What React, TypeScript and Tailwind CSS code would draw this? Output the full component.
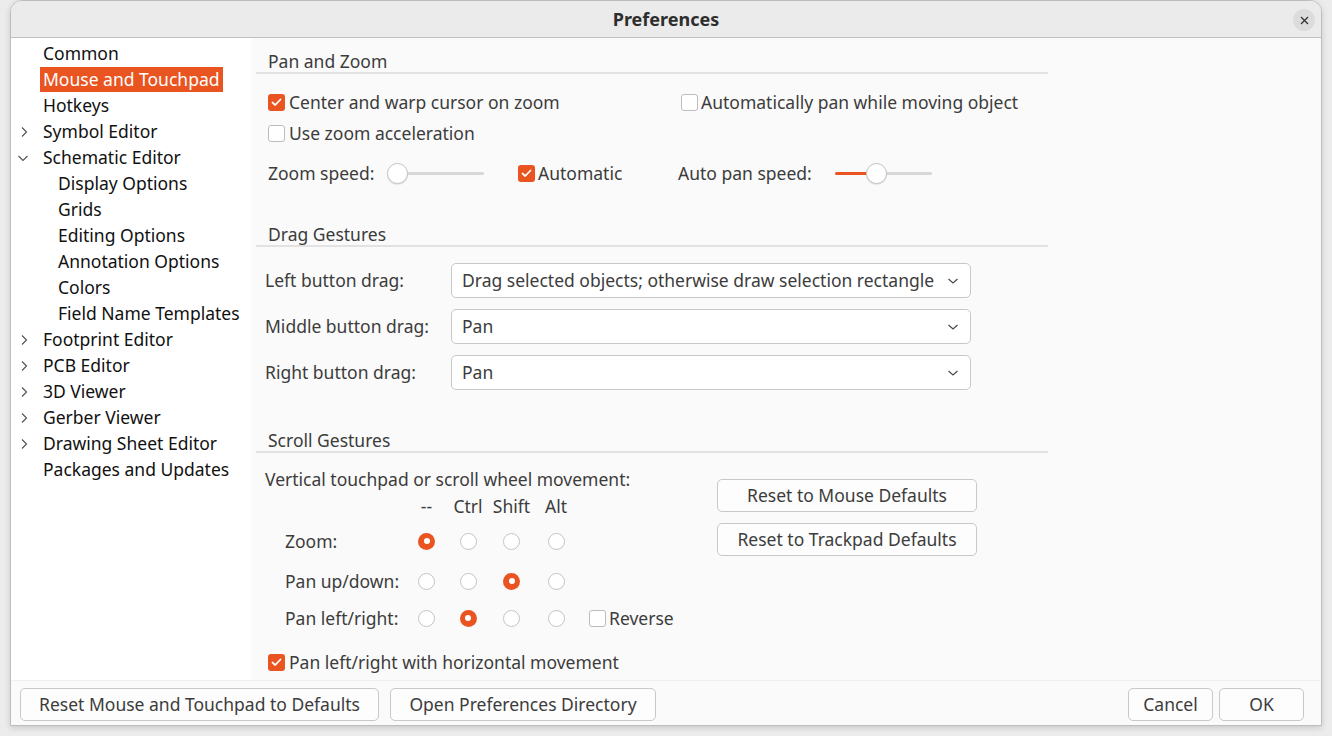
import React from "react";

const F = { fontFamily: '"Noto Sans", "Open Sans", sans-serif' };

function Check({ on }: { on?: boolean }) {
  if (on)
    return (
      <span className="w-[17px] h-[17px] rounded-[3px] bg-[#e95420] flex items-center justify-center shrink-0">
        <svg width="11" height="9" viewBox="0 0 11 9">
          <path d="M1.5 4.5 L4.2 7 L9.5 1.5" stroke="white" strokeWidth="1.8" fill="none" strokeLinecap="round" strokeLinejoin="round" />
        </svg>
      </span>
    );
  return <span className="w-[17px] h-[17px] rounded-[3px] bg-white border border-[#bcbcbc] shrink-0" />;
}

function Radio({ on }: { on?: boolean }) {
  if (on)
    return (
      <span className="w-[17px] h-[17px] rounded-full bg-[#e95420] flex items-center justify-center">
        <span className="w-[6px] h-[6px] rounded-full bg-white" />
      </span>
    );
  return <span className="w-[17px] h-[17px] rounded-full bg-white border border-[#c4c4c4]" />;
}

function Slider({ pos, fill }: { pos: number; fill?: boolean }) {
  return (
    <div className="relative w-[107px] h-[22px] flex items-center">
      <div className="absolute left-[10px] right-[10px] h-[3px] rounded bg-[#d8d8d8]" />
      {fill && <div className="absolute left-[0px] h-[3px] rounded bg-[#e95420]" style={{ width: pos }} />}
      <div
        className="absolute w-[21px] h-[21px] rounded-full bg-white border border-[#c2c2c2] shadow-[0_1px_1px_rgba(0,0,0,0.1)]"
        style={{ left: pos - 10 }}
      />
    </div>
  );
}

function Combo({ text }: { text: string }) {
  return (
    <div className="w-[520px] h-[35px] rounded-[5px] border border-[#c8c8c8] bg-white flex items-center pl-[10px] pr-[11px]">
      <span className="flex-1 whitespace-nowrap">{text}</span>
      <svg width="12" height="8" viewBox="0 0 12 8">
        <path d="M1.5 2 L6 6 L10.5 2" stroke="#4a4a4a" strokeWidth="1.2" fill="none" />
      </svg>
    </div>
  );
}

function Btn({ children, w }: { children: React.ReactNode; w: string }) {
  return (
    <div className={`${w} h-[33px] rounded-[5px] border border-[#c8c8c8] bg-[#fdfdfd] flex items-center justify-center whitespace-nowrap`}>
      {children}
    </div>
  );
}

function Header({ text }: { text: string }) {
  return (
    <div className="w-[792px] h-[24px] border-b-2 border-[#e2e2e2] pl-[12px] flex items-center">{text}</div>
  );
}

const Chev = ({ open }: { open?: boolean }) =>
  open ? (
    <svg width="12" height="8" viewBox="0 0 12 8" className="absolute left-[-23px] top-[9px]">
      <path d="M1.5 2 L6 6.5 L10.5 2" stroke="#555" strokeWidth="1.2" fill="none" />
    </svg>
  ) : (
    <svg width="8" height="12" viewBox="0 0 8 12" className="absolute left-[-20px] top-[7px]">
      <path d="M2 1.5 L6.5 6 L2 10.5" stroke="#555" strokeWidth="1.2" fill="none" />
    </svg>
  );

function TreeItem({ text, child, sel, chev }: { text: string; child?: boolean; sel?: boolean; chev?: "open" | "closed" }) {
  return (
    <div className={`h-[26px] flex items-center ${child ? "pl-[44px]" : "pl-[29px]"}`}>
      <span className={`relative px-[3px] h-[25px] flex items-center whitespace-nowrap ${sel ? "bg-[#e95420] text-white" : ""}`}>
        {chev && <Chev open={chev === "open"} />}
        {text}
      </span>
    </div>
  );
}

export default function App() {
  const cells = ["w-[41px]", "w-[42px]", "w-[45px]", "w-[44px]"];
  const row = (label: string, sel: number, extra?: React.ReactNode, mt?: string) => (
    <div className={`h-[24px] flex items-center pl-[29px] ${mt}`}>
      <span className="w-[121px] whitespace-nowrap">{label}</span>
      {cells.map((c, i) => (
        <span key={i} className={`${c} flex justify-center`}>
          <Radio on={i === sel} />
        </span>
      ))}
      {extra}
    </div>
  );
  return (
    <div className="w-[1332px] h-[736px] bg-[#ececec] pl-[10px] pr-[10px] pb-[10px] text-[#3c3c3c] text-[17.5px]" style={F}>
      <div className="w-[1312px] h-[726px] rounded-t-[12px] border border-[#bdbdbd] bg-[#fafafa] flex flex-col overflow-hidden shadow-[0_2px_6px_rgba(0,0,0,0.15)]">
        {/* title */}
        <div className="h-[37px] bg-[#ebebeb] border-b border-[#c0c0c0] flex items-center justify-center relative shrink-0">
          <span className="font-bold text-[18px] text-[#2e2e2e]">Preferences</span>
          <div className="absolute right-[6px] top-[8px] w-[22px] h-[22px] rounded-full bg-[#dcdcdc] flex items-center justify-center">
            <svg width="9" height="9" viewBox="0 0 9 9">
              <path d="M1 1 L8 8 M8 1 L1 8" stroke="#333" strokeWidth="1.3" />
            </svg>
          </div>
        </div>
        {/* body */}
        <div className="flex h-[642px]">
          <div className="w-[240px] bg-white pt-[2px] text-[#111]">
            <TreeItem text="Common" />
            <TreeItem text="Mouse and Touchpad" sel />
            <TreeItem text="Hotkeys" />
            <TreeItem text="Symbol Editor" chev="closed" />
            <TreeItem text="Schematic Editor" chev="open" />
            <TreeItem text="Display Options" child />
            <TreeItem text="Grids" child />
            <TreeItem text="Editing Options" child />
            <TreeItem text="Annotation Options" child />
            <TreeItem text="Colors" child />
            <TreeItem text="Field Name Templates" child />
            <TreeItem text="Footprint Editor" chev="closed" />
            <TreeItem text="PCB Editor" chev="closed" />
            <TreeItem text="3D Viewer" chev="closed" />
            <TreeItem text="Gerber Viewer" chev="closed" />
            <TreeItem text="Drawing Sheet Editor" chev="closed" />
            <TreeItem text="Packages and Updates" />
          </div>
          <div className="flex-1 pl-[5px] pt-[12px] flex flex-col">
            <Header text="Pan and Zoom" />
            <div className="h-[26px] mt-[15px] flex items-center">
              <div className="w-[425px] flex items-center pl-[12px] gap-[4px]">
                <Check on />
                <span>Center and warp cursor on zoom</span>
              </div>
              <div className="flex items-center gap-[3px]">
                <Check />
                <span>Automatically pan while moving object</span>
              </div>
            </div>
            <div className="h-[26px] mt-[5px] flex items-center pl-[12px] gap-[4px]">
              <Check />
              <span>Use zoom acceleration</span>
            </div>
            <div className="h-[28px] mt-[13px] flex items-center pl-[12px]">
              <span className="w-[119px] whitespace-nowrap">Zoom speed:</span>
              <Slider pos={10} />
              <div className="ml-[24px] w-[160px] flex items-center gap-[3px]">
                <Check on />
                <span>Automatic</span>
              </div>
              <span className="w-[157px] whitespace-nowrap">Auto pan speed:</span>
              <Slider pos={41} fill />
            </div>
            <div className="mt-[36px]">
              <Header text="Drag Gestures" />
            </div>
            {[
              ["Left button drag:", "Drag selected objects; otherwise draw selection rectangle", "mt-[16px]"],
              ["Middle button drag:", "Pan", "mt-[11px]"],
              ["Right button drag:", "Pan", "mt-[11px]"],
            ].map(([l, v, m]) => (
              <div key={l} className={`flex items-center pl-[9px] ${m}`}>
                <span className="w-[186px] whitespace-nowrap">{l}</span>
                <Combo text={v} />
              </div>
            ))}
            <div className="mt-[39px]">
              <Header text="Scroll Gestures" />
            </div>
            <div className="flex">
              <div className="w-[461px] flex flex-col">
                <div className="h-[24px] mt-[14px] flex items-center pl-[9px] whitespace-nowrap">Vertical touchpad or scroll wheel movement:</div>
                <div className="h-[24px] mt-[3px] flex items-center pl-[150px]">
                  {["--", "Ctrl", "Shift", "Alt"].map((t, i) => (
                    <span key={t} className={`${cells[i]} flex justify-center`}>
                      {t}
                    </span>
                  ))}
                </div>
                {row("Zoom:", 0, null, "mt-[11px]")}
                {row("Pan up/down:", 2, null, "mt-[16px]")}
                {row(
                  "Pan left/right:",
                  1,
                  <div className="ml-[11px] flex items-center gap-[3px]">
                    <Check />
                    <span>Reverse</span>
                  </div>,
                  "mt-[13px]"
                )}
                <div className="h-[24px] mt-[20px] flex items-center pl-[12px] gap-[4px] whitespace-nowrap">
                  <Check on />
                  <span>Pan left/right with horizontal movement</span>
                </div>
              </div>
              <div className="flex flex-col gap-[11px] pt-[26px]">
                <Btn w="w-[260px]">Reset to Mouse Defaults</Btn>
                <Btn w="w-[260px]">Reset to Trackpad Defaults</Btn>
              </div>
            </div>
          </div>
        </div>
        {/* bottom */}
        <div className="flex-1 border-t border-[#efefef] flex items-start pt-[7px] pl-[9px] pr-[17px] gap-[11px]">
          <Btn w="w-[359px]">Reset Mouse and Touchpad to Defaults</Btn>
          <Btn w="w-[266px]">Open Preferences Directory</Btn>
          <div className="flex-1" />
          <div className="flex gap-[6px]">
            <Btn w="w-[85px]">Cancel</Btn>
            <Btn w="w-[85px]">OK</Btn>
          </div>
        </div>
      </div>
    </div>
  );
}
